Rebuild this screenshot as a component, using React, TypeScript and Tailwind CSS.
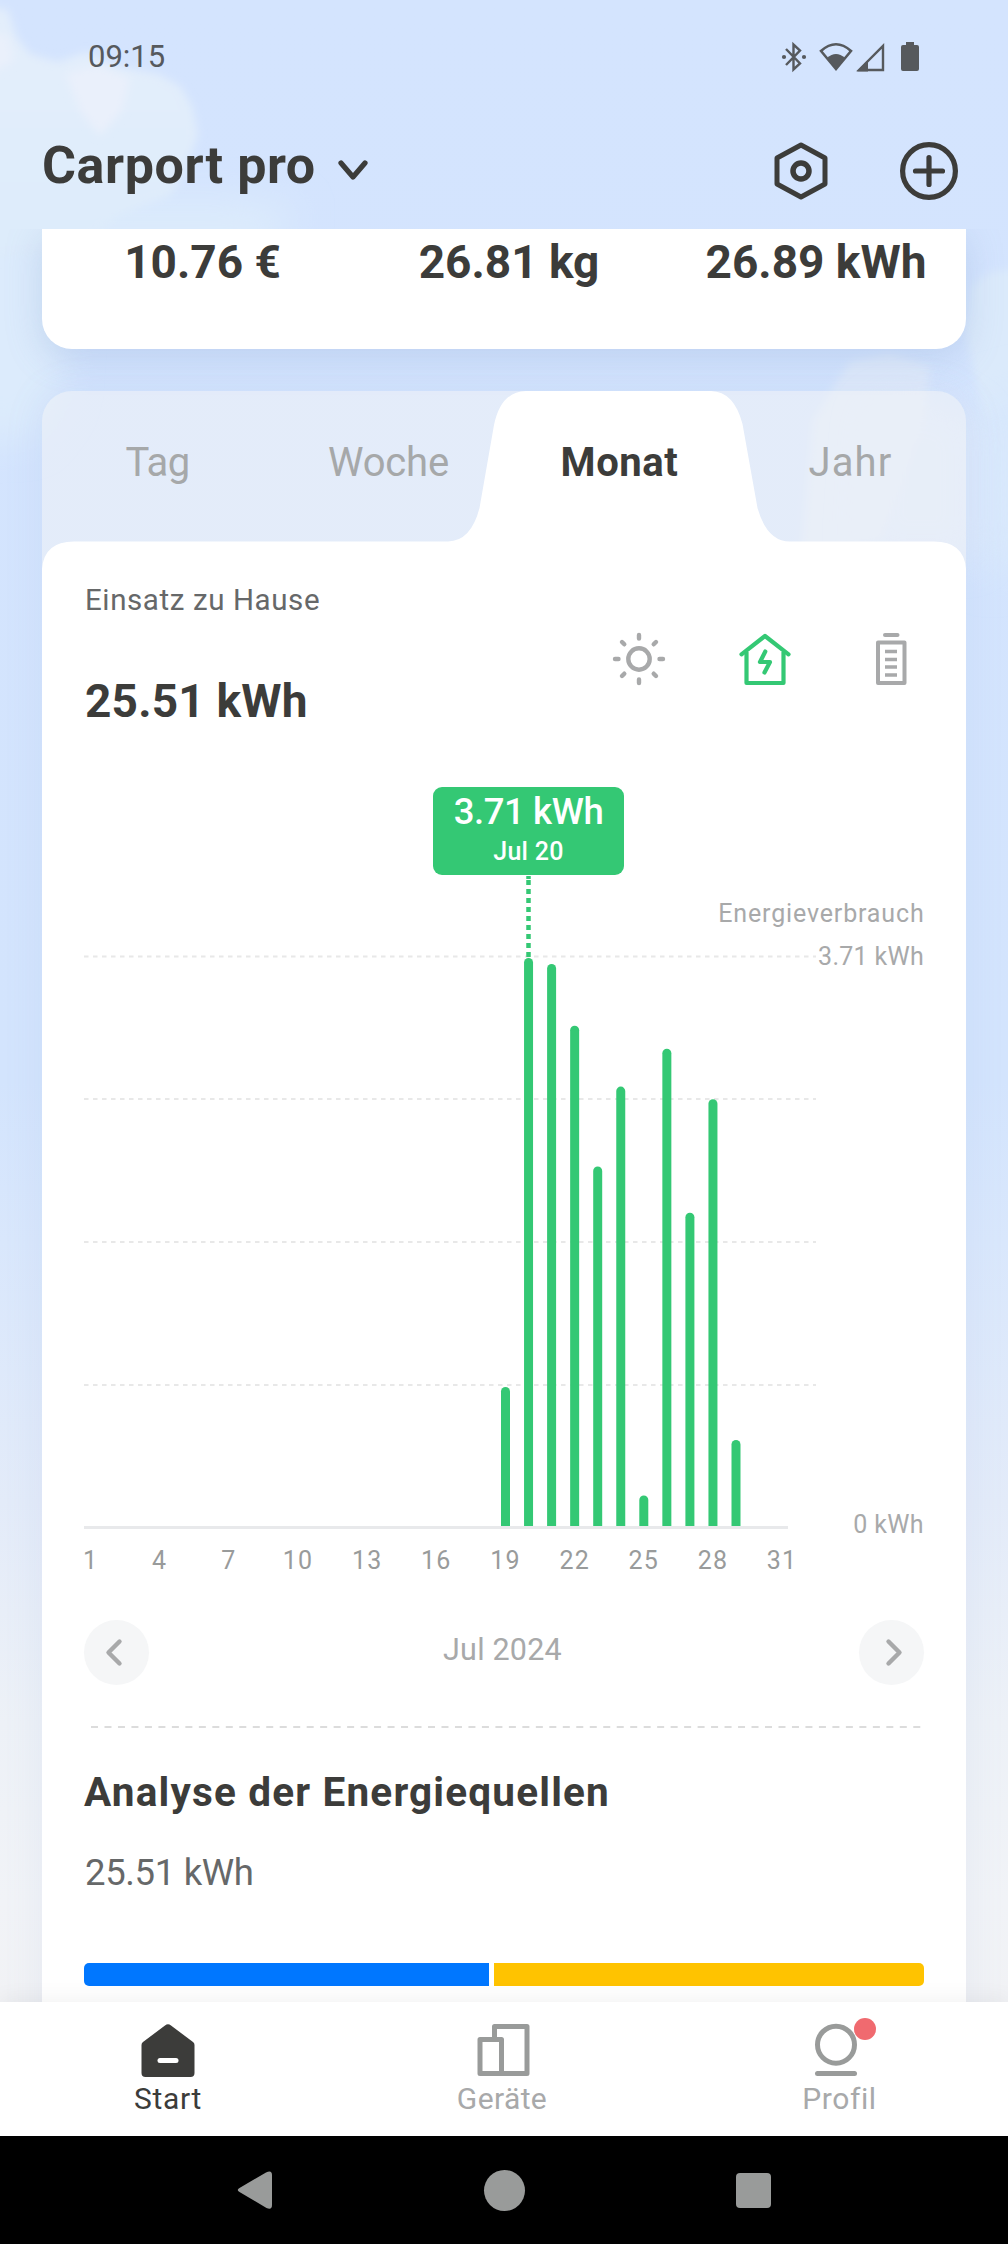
import { useState } from 'react'

const days = [
  { day: 19, value: 0.908 },
  { day: 20, value: 3.71 },
  { day: 21, value: 3.671 },
  { day: 22, value: 3.268 },
  { day: 23, value: 2.348 },
  { day: 24, value: 2.87 },
  { day: 25, value: 0.2 },
  { day: 26, value: 3.118 },
  { day: 27, value: 2.046 },
  { day: 28, value: 2.788 },
  { day: 29, value: 0.562 },
]

const totals = [
  { label: '10.76 €', className: 'w-[321px]' },
  { label: '26.81 kg', className: 'w-[292px]' },
  { label: '26.89 kWh', className: 'w-[322px]' },
]

const tabs = [
  { label: 'Tag', className: 'tracking-[-0.6px]' },
  { label: 'Woche', className: 'tracking-[-0.2px]' },
  { label: 'Monat', className: 'tracking-[0.6px]' },
  { label: 'Jahr', className: 'tracking-[1.2px]' },
]

function Sky() {
  return (
    <svg className="absolute inset-0" width="1008" height="2002" viewBox="0 0 1008 2002" fill="none">
      <defs>
        <linearGradient id="sky" x1="0" y1="0" x2="0" y2="1">
          <stop offset="0" stopColor="#d4e4fe" />
          <stop offset="0.54" stopColor="#d3e4fd" />
          <stop offset="0.62" stopColor="#d9e7fc" />
          <stop offset="0.75" stopColor="#e3ebf9" />
          <stop offset="0.86" stopColor="#edf1f7" />
          <stop offset="0.95" stopColor="#f1f3f7" />
          <stop offset="1" stopColor="#f1f2f5" />
        </linearGradient>
        <linearGradient id="cloud" x1="0" y1="60" x2="0" y2="420" gradientUnits="userSpaceOnUse">
          <stop offset="0" stopColor="#e3eefb" />
          <stop offset="0.6" stopColor="#dcebfb" />
          <stop offset="1" stopColor="#d7e7fd" />
        </linearGradient>
        <filter id="soft" x="-20%" y="-20%" width="140%" height="140%">
          <feGaussianBlur stdDeviation="4" />
        </filter>
        <filter id="softer" x="-60%" y="-60%" width="220%" height="220%">
          <feGaussianBlur stdDeviation="18" />
        </filter>
      </defs>
      <rect width="1008" height="2002" fill="url(#sky)" />
      <path d="M-40 200H240L300 210L260 260L70 260L60 400L30 440L-40 440Z" fill="#dcebfc" filter="url(#softer)" />
      <path
        d="M-20 5L8 10L16 36L30 54L58 62L86 52L116 66L158 74L180 86L192 106L198 134L186 170L170 196L120 215L80 250L-20 260Z"
        fill="url(#cloud)"
        filter="url(#soft)"
      />
      <path d="M66 74L96 66L130 78L122 110L100 136L80 110Z" fill="#eaf0fb" filter="url(#soft)" />
      <path d="M-20 30L8 36L14 60L-20 80Z" fill="#eaf0fb" filter="url(#soft)" />
      <path d="M972 286L990 272L1030 268V400L985 420L965 330Z" fill="#dbeafb" filter="url(#soft)" />
      <path d="M975 400L1040 380V560L985 580Z" fill="#d8e8fc" filter="url(#softer)" />
      <path d="M812 420L850 362L890 354L930 366L924 420L880 540L800 560Z" fill="#dfeafb" filter="url(#soft)" />
      <path d="M870 410L930 390L980 420V560H860Z" fill="#e2ebfa" filter="url(#softer)" opacity="0.6" />
    </svg>
  )
}

function StatusIcons() {
  return (
    <svg width="140" height="32" viewBox="782 41 140 32" fill="none" stroke="#56595d">
      <path d="M787 49L801 63.5L794.5 69.5V44.5L801 50.5L787 65" strokeWidth="2.4" />
      <circle cx="785" cy="57" r="2.1" fill="#56595d" stroke="none" />
      <circle cx="805" cy="57" r="2.1" fill="#56595d" stroke="none" />
      <path d="M822 51Q837 37.5 852 51L837 69Z" strokeWidth="2.6" />
      <path d="M828 58Q837 50 846 58L837 69Z" fill="#56595d" stroke="none" />
      <path d="M860 70L884 46V70Z" strokeWidth="2.4" />
      <path d="M858 71.5L869 60V71.5Z" fill="#56595d" stroke="none" />
      <path
        d="M907 42H915V45H918Q920 45 920 47V69Q920 71 918 71H904Q902 71 902 69V47Q902 45 904 45H907Z"
        fill="#56595d"
        stroke="none"
      />
    </svg>
  )
}

function Header() {
  return (
    <header className="relative z-10 h-[229px] shrink-0">
      <div className="flex h-[114px] items-center justify-between pr-[87px] pl-[88px]">
        <span className="mt-[1px] text-[31px] text-[#56595d]">09:15</span>
        <StatusIcons />
      </div>
      <div className="flex h-[114px] items-center justify-between pr-[49px] pl-[42px]">
        <button className="flex items-center gap-[21px]">
          <span className="mt-[-10px] text-[52px] leading-[60px] font-bold tracking-[0.6px]">Carport pro</span>
          <svg width="32" height="24" viewBox="0 0 32 24" fill="none" stroke="#3c3c3a" strokeWidth="5.2">
            <path d="M4 4L16 18L28 4" strokeLinecap="round" strokeLinejoin="round" />
          </svg>
        </button>
        <div className="flex items-center gap-[69px]">
          <svg width="58" height="60" viewBox="-29 -30 58 60" fill="none" stroke="#3c3c3a" strokeWidth="5">
            <path d="M0 -26L24 -13V13L0 26L-24 13V-13Z" strokeLinejoin="round" />
            <circle r="8" strokeWidth="5.5" />
          </svg>
          <svg width="60" height="60" viewBox="-30 -30 60 60" fill="none" stroke="#3c3c3a" strokeWidth="5.2">
            <circle r="26.4" />
            <path d="M-13.500 0H13.500M0 -13.500V13.500" strokeLinecap="round" />
          </svg>
        </div>
      </div>
    </header>
  )
}

function Tabs() {
  const [active, setActive] = useState('Monat')
  return (
    <nav className="relative flex h-[144px]">
      <svg className="absolute top-0 left-0" width="924" height="184" viewBox="42 391 924 184">
        <path
          d="M42 575V569Q44 541.5 74 541.5H448Q471 541 479.5 508L494 425Q501 391.5 526 391H711Q734 391.5 742.5 424L757.5 508Q767 541.5 790 541.5H934Q964 541.5 966 569V575Z"
          fill="#fff"
        />
      </svg>
      {tabs.map((tab) => (
        <button
          key={tab.label}
          onClick={() => setActive(tab.label)}
          className={`relative w-[231px] text-[40px] ${tab.className} ${
            tab.label === active ? 'font-bold text-[#3c3c3a]' : 'text-[#a6a8a9]'
          }`}
        >
          {tab.label}
        </button>
      ))}
    </nav>
  )
}

function SourceIcons() {
  return (
    <div className="flex gap-[70px] pt-[61px]">
      <svg width="56" height="56" viewBox="-28 -28 56 56" fill="none" stroke="#a8a9aa" strokeWidth="4.4">
        <circle r="10.7" />
        <path
          d="M0 -24V-20.500M0 20.500V24M-24 0H-20.500M20.500 0H24M-17 -17L-14.700 -14.700M17 -17L14.700 -14.700M-17 17L-14.700 14.700M17 17L14.700 14.700"
          strokeLinecap="round"
        />
      </svg>
      <svg width="56" height="56" viewBox="738 631 56 56" fill="none" stroke="#34c874" strokeWidth="4.2">
        <path d="M742.500 654.300L766 636L789.500 654.300" strokeLinecap="round" strokeLinejoin="round" />
        <path d="M747.500 652V683H784.500V652" strokeLinejoin="round" />
        <path d="M766.300 651.500L761 662H771L765.500 672.500" strokeLinecap="round" strokeLinejoin="round" />
      </svg>
      <svg width="56" height="56" viewBox="864 631 56 56" fill="none" stroke="#a8a9aa" strokeWidth="4">
        <path d="M886 635H898.500" strokeLinecap="round" />
        <path d="M879 642.500H905.500V683H879Z" strokeLinejoin="round" />
        <path d="M886 651.500H898M886 659.500H898M886 667H898M886 675H898" strokeWidth="3.6" />
      </svg>
    </div>
  )
}

const TOP = 958
const BASE = 1526
const dayX = (day: number) => 90.6 + (day - 1) * 23.05

function Bar({ day, value }: { day: number; value: number }) {
  const x = dayX(day)
  const y = BASE - (value / 3.71) * (BASE - TOP)
  return <path d={`M${x - 4.5} ${BASE}V${y + 4.5}A4.5 4.5 0 0 1 ${x + 4.5} ${y + 4.5}V${BASE}Z`} fill="#34c874" />
}

function Chart() {
  return (
    <svg className="block" width="924" height="800" viewBox="42 780 924 800" fill="none">
      {[956.5, 1099, 1242, 1385].map((y) => (
        <path key={y} d={`M84 ${y}H816`} stroke="#e8e8e8" strokeWidth="2" strokeDasharray="4.5 4.5" />
      ))}
      <path d="M84 1527.500H788" stroke="#e8e9eb" strokeWidth="3" />
      {days.map((d) => (
        <Bar key={d.day} day={d.day} value={d.value} />
      ))}
      <path d="M528.500 876V879" stroke="#34c874" strokeWidth="4.5" />
      <path d="M528.500 880V958" stroke="#34c874" strokeWidth="4.5" strokeDasharray="5 4" />
      <rect x="433" y="787" width="191" height="88" rx="9" fill="#34c874" />
      <g fill="#fff" fontWeight="500" textAnchor="middle">
        <text x="528.5" y="824" fontSize="36.5" letterSpacing="-0.4">3.71 kWh</text>
        <text x="528.5" y="860" fontSize="25" letterSpacing="0.3">Jul 20</text>
      </g>
      <g fill="#a8a9aa" fontSize="25" textAnchor="end">
        <text x="924.5" y="922" letterSpacing="0.85">Energieverbrauch</text>
        <text x="924" y="965" letterSpacing="0.3">3.71 kWh</text>
        <text x="924" y="1533" letterSpacing="0.4">0 kWh</text>
      </g>
      <g fill="#999b9b" fontSize="25" textAnchor="middle" letterSpacing="1.2">
        {[1, 4, 7, 10, 13, 16, 19, 22, 25, 28, 31].map((day) => (
          <text key={day} x={dayX(day)} y="1569">
            {day}
          </text>
        ))}
      </g>
    </svg>
  )
}

function MonthPicker() {
  return (
    <div className="mt-[40px] flex h-[65px] items-center justify-between px-[42px]">
      <button className="flex size-[65px] items-center justify-center rounded-full bg-[#f5f6f7]">
        <svg className="-ml-[3px]" width="26" height="32" viewBox="0 0 26 32" fill="none" stroke="#a8a9aa" strokeWidth="4.4">
          <path d="M17.500 4.500L6.500 15.500L17.500 26.500" strokeLinecap="round" strokeLinejoin="round" />
        </svg>
      </button>
      <span className="mt-[-6px] -ml-[3px] text-[30.5px] tracking-[0.2px] text-[#a8a9aa]">Jul 2024</span>
      <button className="flex size-[65px] items-center justify-center rounded-full bg-[#f5f6f7]">
        <svg className="ml-[3px]" width="26" height="32" viewBox="0 0 26 32" fill="none" stroke="#a8a9aa" strokeWidth="4.4">
          <path d="M8.500 4.500L19.500 15.500L8.500 26.500" strokeLinecap="round" strokeLinejoin="round" />
        </svg>
      </button>
    </div>
  )
}

function EnergySources() {
  return (
    <section className="mt-[41px]">
      <svg className="block" width="924" height="2" viewBox="42 0 924 2">
        <path d="M91 1H924" stroke="#dcdcdc" strokeWidth="2" strokeDasharray="7 6.48" />
      </svg>
      <div className="px-[42px]">
        <h2 className="mt-[39px] text-[40.5px] leading-[50px] font-bold tracking-[1.18px]">Analyse der Energiequellen</h2>
        <p className="mt-[36px] ml-[1px] text-[36.5px] leading-[40px] tracking-[-0.35px] text-[#666869]">25.51 kWh</p>
        <div className="mt-[70px] flex h-[23px] gap-[5px] overflow-hidden rounded-[5px]">
          <div className="w-[405px] bg-[#0077ff]" />
          <div className="flex-1 bg-[#ffc300]" />
        </div>
      </div>
    </section>
  )
}

function BottomNav() {
  return (
    <nav className="relative z-10 flex h-[134px] shrink-0 bg-white pt-[18px] text-[30px] leading-[34px] text-[#a8a9aa] shadow-[0_-4px_20px_rgba(0,0,0,0.05)]">
      <a className="flex w-[336px] flex-col items-center text-[#3c3c3a]">
        <svg width="60" height="62" viewBox="138 2020 60 62">
          <path
            d="M165 2025.500Q168 2023 171 2025.500L193 2042Q194.500 2043 194.500 2045V2073Q194.500 2077 190.500 2077H145.500Q141.500 2077 141.500 2073V2045Q141.500 2043 143 2042Z"
            fill="#3c3c3a"
          />
          <path d="M160 2060.500H176" stroke="#fff" strokeWidth="5" strokeLinecap="round" />
        </svg>
        <span className="tracking-[0.7px]">Start</span>
      </a>
      <a className="flex w-[332px] flex-col items-center">
        <svg width="60" height="62" viewBox="472 2020 60 62" fill="none" stroke="#999b9a" strokeWidth="5">
          <path
            d="M480 2039.500H501.500V2073.500H480ZM494.500 2039V2026.500H527V2073.500H501.500"
            strokeLinejoin="round"
          />
        </svg>
        <span className="tracking-[0.4px]">Geräte</span>
      </a>
      <a className="flex w-[340px] flex-col items-center">
        <svg width="60" height="62" viewBox="808 2020 60 62" className="overflow-visible" fill="none" stroke="#999b9a" strokeWidth="5">
          <circle cx="836" cy="2044.7" r="18.5" />
          <path d="M817.500 2073.500H854.500" strokeLinecap="round" />
          <circle cx="865" cy="2029" r="11" fill="#f06a6f" stroke="none" />
        </svg>
        <span className="ml-[3px] tracking-[0.6px]">Profil</span>
      </a>
    </nav>
  )
}

function SystemBar() {
  return (
    <div className="relative z-20 flex h-[108px] shrink-0 items-center justify-between bg-black pr-[237px] pl-[236px]">
      <svg width="38" height="42" viewBox="0 0 38 42" fill="#999b9a">
        <path d="M30 3.500Q36 0.500 36 6V36Q36 41.500 30.500 39L3.500 23Q0 21 3.500 19Z" />
      </svg>
      <div className="-ml-[1px] size-[41px] rounded-full bg-[#999b9a]" />
      <div className="size-[35px] rounded-[4px] bg-[#999b9a]" />
    </div>
  )
}

export default function App() {
  return (
    <div className="relative flex h-[2244px] w-[1008px] flex-col overflow-hidden bg-[#f2f2f7] font-['Roboto',sans-serif] text-[#3c3c3a]">
      <Sky />
      <Header />
      <main className="relative flex-1 overflow-hidden px-[42px]">
        <div className="flex h-[120px] rounded-b-[30px] bg-white text-center text-[46px] leading-[66px] font-bold shadow-[0_8px_36px_rgba(120,150,200,0.26)]">
          {totals.map((total) => (
            <span key={total.label} className={`shrink-0 ${total.className}`}>
              {total.label}
            </span>
          ))}
        </div>
        <div className="mt-[42px] h-[1700px] rounded-t-[30px] bg-[#f1f3f6]/55 shadow-[0_0_40px_rgba(130,160,210,0.1)]">
          <Tabs />
          <div className="relative mt-[35px] h-[1500px] bg-white">
            <div className="flex h-[210px] justify-between pr-[47px] pl-[43px]">
              <div>
                <p className="pt-[12px] text-[29.5px] leading-[36px] tracking-[0.6px] text-[#666869]">Einsatz zu Hause</p>
                <p className="mt-[55px] text-[46px] leading-[56px] font-bold tracking-[0.2px]">25.51 kWh</p>
              </div>
              <SourceIcons />
            </div>
            <Chart />
            <MonthPicker />
            <EnergySources />
          </div>
        </div>
      </main>
      <BottomNav />
      <SystemBar />
    </div>
  )
}
